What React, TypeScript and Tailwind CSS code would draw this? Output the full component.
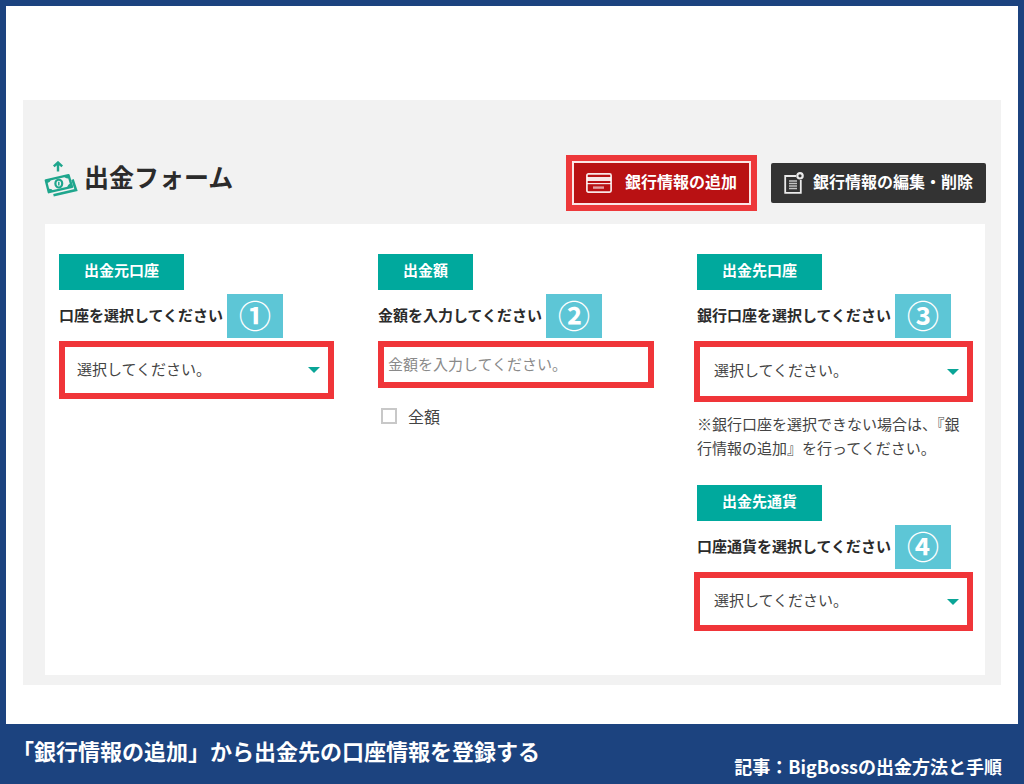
import React, { useState } from 'react';

interface StepHeadingProps {
  tag: string;
  label: string;
  badge: string;
  htmlFor: string;
  className?: string;
}

function StepHeading({ tag, label, badge, htmlFor, className = '' }: StepHeadingProps) {
  return (
    <div className={className}>
      <h3 className="inline-flex h-9 items-center bg-[#00a99d] px-[25px] pb-1 text-[15px] font-bold text-white">
        {tag}
      </h3>
      <div className="flex items-center gap-1 pt-1 pb-[3px]">
        <label htmlFor={htmlFor} className="pb-[2px] text-[15px] font-bold whitespace-nowrap">
          {label}
        </label>
        <span className="flex h-11 w-14 items-center justify-center bg-[#5dc6d6] pb-1 text-[32px] leading-none font-bold text-white">
          {badge}
        </span>
      </div>
    </div>
  );
}

interface SelectBoxProps {
  id: string;
  className?: string;
}

function SelectBox({ id, className = '' }: SelectBoxProps) {
  return (
    <div className="relative">
      <select
        id={id}
        className={`block w-full appearance-none border-6 border-[#f03539] bg-white pb-[2px] text-[15px] text-[#444] outline-none ${className}`}
      >
        <option>選択してください。</option>
      </select>
      <svg
        className="pointer-events-none absolute inset-y-0 right-[14px] my-auto h-[6px] w-3"
        viewBox="0 0 12 6"
        fill="#0aa597"
      >
        <path d="M0 0h12L6 6z" />
      </svg>
    </div>
  );
}

function WithdrawIcon() {
  return (
    <svg className="h-9 w-[34px] shrink-0" viewBox="0 0 34 36" fill="none" stroke="#1fa68d">
      <path d="M14 10.500V2M9.800 5.400L14 1.500L18.200 5.400" strokeWidth="2.400" />
      <path d="M1.800 19.300L24.500 14.200L28 25.800L4.800 31.200Z" strokeWidth="2.400" strokeLinejoin="round" />
      <path
        d="M2 19l5-1.200c0 2.300-1.800 4-4 4.200zM24.500 14l-5 1.100c1.200 2 3.400 2.700 5.700 2.200zM4.500 31.300l5-1.200c-1-2-3.500-2.800-5.800-2.300zM28 26l-4.800 1.100c0-2.300 1.400-4 3.700-4.500z"
        fill="#1fa68d"
        stroke="none"
      />
      <ellipse cx="14.800" cy="22.600" rx="3.400" ry="3.900" strokeWidth="2.200" />
      <path d="M14.800 20.700v3.800" strokeWidth="1.500" />
      <path d="M28.500 18.500L32 29L9.500 34.200" strokeWidth="2.600" />
    </svg>
  );
}

function CardIcon() {
  return (
    <svg className="h-5 w-[26px] shrink-0" viewBox="0 0 26 20" fill="none" stroke="#fff" strokeOpacity="0.9">
      <rect x="0.900" y="0.900" width="24.200" height="18.200" rx="1.500" strokeWidth="1.700" />
      <path d="M1 6h24" strokeWidth="4" />
      <path d="M1 10.600h24" strokeWidth="1.200" />
      <path d="M7 14.600h11" strokeWidth="2.400" strokeOpacity="0.600" />
    </svg>
  );
}

function EditIcon() {
  return (
    <svg className="h-[22px] w-5 shrink-0" viewBox="0 0 20 22" fill="none" stroke="#fff" strokeOpacity="0.9">
      <path d="M12 4H1.200v16.800h15.600V8" strokeWidth="1.800" />
      <path d="M5 9h8M5 11.500h8M5 14h8M5 16.500h8" strokeWidth="1.500" strokeOpacity="0.700" />
      <circle cx="16" cy="3.800" r="2.700" strokeWidth="2.200" />
    </svg>
  );
}

export default function App() {
  const [amount, setAmount] = useState('');
  const [isAll, setIsAll] = useState(false);

  return (
    <div className="flex min-h-screen flex-col border-x-6 border-t-6 border-[#1c437f] bg-white font-['Noto_Sans_CJK_JP',sans-serif] text-[#2b2b2b]">
      <main className="flex-1 px-[17px] pt-[94px] pb-8">
        <section className="bg-[#f2f2f2] pt-[55px] pr-4 pb-[10px] pl-[21px]">
          {/* Title and bank actions */}
          <div className="mb-[13px] flex items-center justify-between">
            <h2 className="flex items-center gap-[6px] pb-2 text-[25px] leading-9 font-bold">
              <WithdrawIcon />
              <span className="pb-[6px]">出金フォーム</span>
            </h2>
            <div className="-mr-px flex items-center gap-[14px]">
              <div className="border-6 border-[#ed383a]">
                <button className="flex h-11 items-center gap-[13px] rounded-[2px] border-2 border-[#fbe6e6] bg-[#b91113] px-3 text-[16px] font-bold text-white">
                  <CardIcon />
                  <span className="pb-1">銀行情報の追加</span>
                </button>
              </div>
              <button className="flex h-10 items-center gap-[9px] rounded-[2px] bg-[#333] px-[13px] text-[16px] font-bold text-white">
                <EditIcon />
                <span className="pb-1">銀行情報の編集・削除</span>
              </button>
            </div>
          </div>

          {/* Withdrawal form */}
          <form
            className="ml-px grid grid-cols-[319fr_316fr_279fr] bg-white pt-[30px] pr-3 pb-11 pl-[14px]"
            onSubmit={(e) => e.preventDefault()}
          >
            <div className="pr-11">
              <StepHeading tag="出金元口座" label="口座を選択してください" badge="①" htmlFor="source" />
              <SelectBox id="source" className="h-[58px] px-3" />
            </div>

            <div className="pr-10">
              <StepHeading tag="出金額" label="金額を入力してください" badge="②" htmlFor="amount" />
              <input
                id="amount"
                type="text"
                value={amount}
                onChange={(e) => setAmount(e.target.value)}
                placeholder="金額を入力してください。"
                className="block h-[47px] w-full border-6 border-[#f03539] bg-white px-1 pb-[2px] text-[15px] outline-none placeholder:text-[#8a8a8a]"
              />
              <label className="mt-4 ml-[3px] flex items-center gap-[11px] text-[16px] text-[#444]">
                <input
                  type="checkbox"
                  checked={isAll}
                  onChange={(e) => setIsAll(e.target.checked)}
                  className="size-4 appearance-none border-2 border-[#c8c8c8] bg-white checked:bg-[#00a99d]"
                />
                全額
              </label>
            </div>

            <div>
              <StepHeading
                tag="出金先口座"
                label="銀行口座を選択してください"
                badge="③"
                htmlFor="destination"
                className="pl-[3px]"
              />
              <SelectBox id="destination" className="h-[61px] px-[14px]" />
              <p className="mt-[10px] mb-[25px] pl-[3px] text-[15px] leading-6 text-[#444]">
                ※銀行口座を選択できない場合は、『銀行情報の追加』を行ってください。
              </p>
              <StepHeading
                tag="出金先通貨"
                label="口座通貨を選択してください"
                badge="④"
                htmlFor="currency"
                className="pl-[3px]"
              />
              <SelectBox id="currency" className="h-[59px] px-[14px]" />
            </div>
          </form>
        </section>
      </main>

      <footer className="flex items-end justify-between bg-[#1c437f] px-[6px] pt-2 pb-[6px] text-white">
        <p className="pb-[10px] text-[22px] leading-9 font-bold">「銀行情報の追加」から出金先の口座情報を登録する</p>
        <p className="pr-[10px] text-[18px] leading-6 font-bold">記事：BigBossの出金方法と手順</p>
      </footer>
    </div>
  );
}
